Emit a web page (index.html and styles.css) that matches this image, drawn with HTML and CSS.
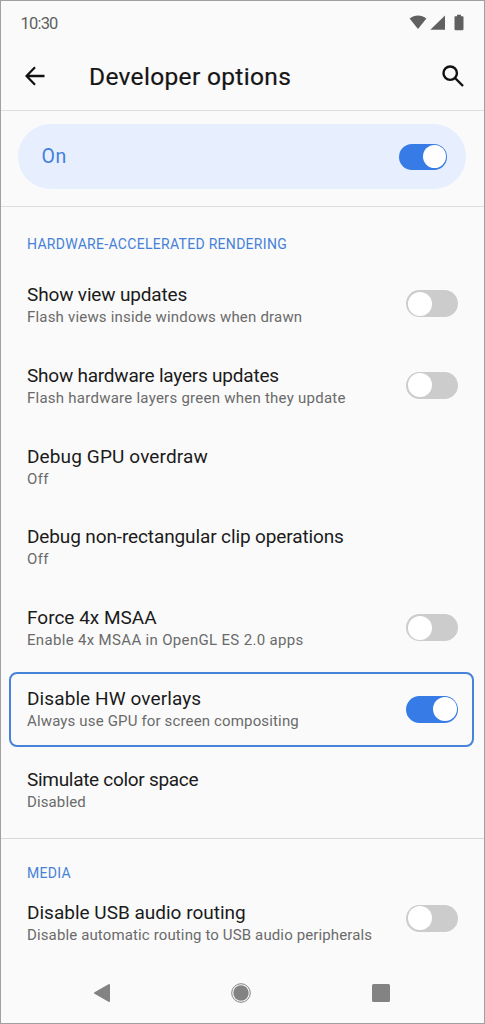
FILE: index.html
```html
<!DOCTYPE html>
<html lang="en">
<head>
<meta charset="utf-8">
<title>Developer options</title>
<link rel="stylesheet" href="styles.css">
</head>
<body>
<main class="phone">
  <div class="status">
    <span class="clock">10:30</span>
    <svg class="status-icons" width="56" height="18" viewBox="0 0 56 18">
      <path d="M.6 4.4C5.700 0.500 12.300 0.500 17.400 4.400L9 15z"/>
      <path d="M36 1.500V15.800H21.300z"/>
      <path d="M46.300 2.200H48V.8h4v1.400h1.700q.8 0 .8.8v12q0 1.200-1.200 1.200h-6.600q-1.200 0-1.200-1.200V3q0-.8.800-.8z"/>
    </svg>
  </div>
  <header class="appbar">
    <svg class="back" width="20" height="20" viewBox="0 0 20 20"><path d="M19.500 10H1.800M10 1.200L1.500 10L10 18.800"/></svg>
    <h1>Developer options</h1>
    <svg class="search" width="22" height="22" viewBox="0 0 22 22"><circle cx="8.200" cy="8.200" r="6.700"/><path d="M13 13L21 21"/></svg>
  </header>
  <section class="master">
    <div class="pill"><span>On</span><i class="switch small on"></i></div>
  </section>
  <section class="group rendering">
    <h2>HARDWARE-ACCELERATED RENDERING</h2>
    <div class="row r1"><div class="label"><h3>Show view updates</h3><p>Flash views inside windows when drawn</p></div><i class="switch"></i></div>
    <div class="row r2"><div class="label"><h3>Show hardware layers updates</h3><p>Flash hardware layers green when they update</p></div><i class="switch"></i></div>
    <div class="row r3"><div class="label"><h3>Debug GPU overdraw</h3><p>Off</p></div></div>
    <div class="row r4"><div class="label"><h3>Debug non-rectangular clip operations</h3><p>Off</p></div></div>
    <div class="row r5"><div class="label"><h3>Force 4x MSAA</h3><p>Enable 4x MSAA in OpenGL ES 2.0 apps</p></div><i class="switch"></i></div>
    <div class="row r6 selected"><div class="label"><h3>Disable HW overlays</h3><p>Always use GPU for screen compositing</p></div><i class="switch on"></i></div>
    <div class="row r7"><div class="label"><h3>Simulate color space</h3><p>Disabled</p></div></div>
  </section>
  <section class="group media">
    <h2>MEDIA</h2>
    <div class="row r8"><div class="label"><h3>Disable USB audio routing</h3><p>Disable automatic routing to USB audio peripherals</p></div><i class="switch"></i></div>
  </section>
  <nav class="navbar">
    <svg width="18" height="20" viewBox="0 0 18 20"><path d="M2 10L16 2V18z" stroke="#838383" stroke-width="2" stroke-linejoin="round"/></svg>
    <svg width="20" height="20" viewBox="0 0 20 20"><circle cx="10" cy="10" r="7.700"/><circle cx="10" cy="10" r="9.300" fill="none" stroke="#838383"/></svg>
    <svg width="18" height="18" viewBox="0 0 18 18"><rect width="18" height="18" rx="1.500"/></svg>
  </nav>
</main>
</body>
</html>
```
FILE: styles.css
```css
* { box-sizing: border-box; margin: 0; }
body { background: #fafafa; font-family: Roboto, "Liberation Sans", sans-serif; }
svg { display: block; flex: none; }
h1, h2, h3, p, span { font-weight: 400; white-space: nowrap; }
.phone { width: 485px; height: 1024px; border: 1px solid #a0a0a0; background: #fafafa; display: flex; flex-direction: column; overflow: hidden; }
.status { height: 44px; padding: 0 19px 0 19.500px; display: flex; justify-content: space-between; align-items: center; }
.clock { font-size: 16.500px; letter-spacing: -.8px; color: #5f5f5f; }
.status-icons { fill: #606060; margin-bottom: 1px; }
.appbar { height: 66px; border-bottom: 1px solid #dedede; padding: 0 20px 3px 24px; display: flex; align-items: center; }
.back { fill: none; stroke: #111; stroke-width: 2.300; }
.appbar h1 { margin-left: 44px; padding-top: 2px; flex: 1; font-size: 24.500px; line-height: 32px; letter-spacing: .33px; color: #151515; -webkit-text-stroke: .2px #151515; }
.search { fill: none; stroke: #111; stroke-width: 2.400; }
.master { height: 96px; padding: 13px 18px 0 17px; border-bottom: 1px solid #dedede; }
.pill { height: 65px; border-radius: 33px; background: #e7effe; padding: 0 19px 0 23.500px; display: flex; align-items: center; justify-content: space-between; color: #427fdb; font-size: 19.500px; letter-spacing: .5px; }
.switch { position: relative; flex: none; width: 52px; height: 27px; border-radius: 14px; background: #ccc; }
.switch::after { content: ""; position: absolute; left: 1.500px; top: 1.500px; width: 24px; height: 24px; border-radius: 50%; background: #fff; }
.switch.on { background: #377be6; }
.switch.on::after { left: auto; right: 1.500px; }
.switch.small { width: 48px; height: 26px; }
.switch.small::after { width: 23px; height: 23px; }
.group h2 { font-size: 14px; line-height: 20px; letter-spacing: .3px; color: #4581d8; padding-left: 26px; }
.rendering { padding-top: 27px; height: 632px; border-bottom: 1px solid #d8d8d8; }
.rendering h2 { margin-bottom: 9px; }
.media { padding-top: 24px; }
.row { display: flex; align-items: center; justify-content: space-between; padding: 0 26px; }
.label { padding-top: 3px; }
.row h3 { font-size: 19px; line-height: 23px; color: #1b1b1b; }
.row p { font-size: 15px; line-height: 22px; color: #6a6a6a; }
.r1 { height: 81px; }
.r1 h3 { letter-spacing: -.15px; }
.r1 p { letter-spacing: .19px; }
.r2 { height: 82px; }
.r2 h3 { letter-spacing: -.22px; }
.r2 p { letter-spacing: .25px; }
.r3 { height: 79px; }
.r3 h3 { letter-spacing: .13px; }
.r3 p, .r4 p { letter-spacing: .4px; }
.r3 .label { padding-top: 4px; }
.r4 { height: 81px; }
.r4 h3 { letter-spacing: -.12px; }
.r5 { height: 83px; }
.r5 .label { padding-top: 1px; }
.r5 p { letter-spacing: .33px; }
.r6 { height: 75px; margin: 3px 10px 0 8px; }
.r6 .label { padding: 0; }
.r6 h3 { letter-spacing: .1px; }
.r6 p { letter-spacing: .15px; }
.selected { border: 2px solid #4683d9; border-radius: 8px; padding: 0 14px 1px 16px; }
.r7 { height: 84px; }
.r7 .label { padding-top: 2px; }
.r7 h3 { letter-spacing: -.3px; }
.r7 p { letter-spacing: .12px; }
.r8 { height: 70px; }
.r8 .label { padding-top: 10px; }
.r8 p { letter-spacing: .13px; }
.navbar { margin-top: auto; height: 60px; padding: 0 94.500px 0 92px; display: flex; justify-content: space-between; align-items: center; fill: #838383; }
```
